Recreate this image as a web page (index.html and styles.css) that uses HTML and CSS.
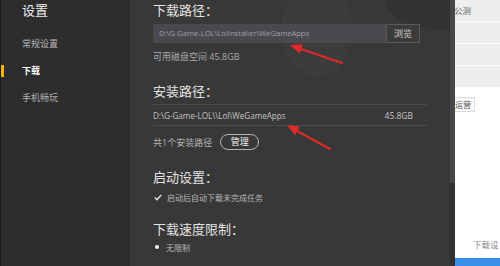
FILE: index.html
```html
<!DOCTYPE html>
<html lang="zh-CN">
<head>
<meta charset="utf-8">
<title>设置 - 下载</title>
<link rel="stylesheet" href="styles.css">
</head>
<body>
<div class="app">
  <aside class="sidebar">
    <div class="side-title">设置</div>
    <nav class="side-nav">
      <div class="side-item">常规设置</div>
      <div class="side-item active">下载</div>
      <div class="side-item">手机畅玩</div>
    </nav>
  </aside>

  <main class="content">
    <h2 class="sec-title">下载路径：</h2>
    <div class="path-input">
      <span class="path-text">D:\G-Game-LOL\LolInstaller\WeGameApps</span>
      <button class="browse">浏览</button>
    </div>
    <div class="hint">可用磁盘空间 45.8GB</div>

    <h2 class="sec-title t2">安装路径：</h2>
    <div class="install-row">
      <span class="install-path">D:\G-Game-LOL\\Lol\WeGameApps</span>
      <span>45.8GB</span>
    </div>
    <div class="manage-row">
      <span>共1个安装路径</span>
      <button class="pill">管理</button>
    </div>

    <h2 class="sec-title t3">启动设置：</h2>
    <div class="check-row">
      <svg class="check" width="8" height="7" viewBox="0 0 8 7"><polyline points="0.8,3.6 3,5.8 7.2,1" fill="none" stroke="#e6e6e6" stroke-width="1.4"/></svg>
      <span>启动后自动下载未完成任务</span>
    </div>

    <h2 class="sec-title t4">下载速度限制：</h2>
    <div class="radio-row">
      <span class="dot"></span>
      <span>无限制</span>
    </div>
  </main>

  <div class="scrollbar"><div class="thumb"></div></div>

  <aside class="peek">
    <div class="peek-rows">
      <div class="peek-row">公测</div>
      <div class="peek-row"></div>
      <div class="peek-row"></div>
      <div class="peek-row"></div>
    </div>
    <div class="peek-chip">运营</div>
    <div class="peek-spacer"></div>
    <div class="peek-foot">下载设</div>
    <div class="peek-bar"></div>
  </aside>
</div>

<svg class="annot" width="500" height="266" viewBox="0 0 500 266">
  <line x1="342" y1="63" x2="301" y2="49" stroke="#e02a2a" stroke-width="2" stroke-linecap="round"/>
  <polygon points="290,45 302.9,44.2 299.7,53.6" fill="#e02a2a"/>
  <line x1="330" y1="149" x2="297" y2="131" stroke="#e02a2a" stroke-width="2" stroke-linecap="round"/>
  <polygon points="287,125 299.9,126.5 295,135.2" fill="#e02a2a"/>
</svg>
</body>
</html>
```

FILE: styles.css
```css
* { box-sizing: border-box; }

html, body {
  margin: 0;
  padding: 0;
  width: 500px;
  height: 266px;
  overflow: hidden;
}

body {
  position: relative;
  font-family: "Open Sans", "Noto Sans CJK SC", sans-serif;
  background: #383838;
}

.app {
  display: flex;
  width: 500px;
  height: 266px;
}

/* ---------- sidebar ---------- */
.sidebar {
  width: 130px;
  flex: none;
  background: #2d2d2d;
  border-left: 1px solid #1b1b1b;
  padding-top: 1px;
}

.side-title {
  padding-left: 21px;
  font-size: 13px;
  line-height: 18px;
  color: #ececec;
}

.side-nav {
  margin-top: 11px;
  display: flex;
  flex-direction: column;
}

.side-item {
  display: flex;
  align-items: center;
  height: 27px;
  font-size: 9px;
  color: #b4b4b4;
}

.side-item::before {
  content: "";
  width: 3px;
  height: 12px;
  margin-right: 18px;
  background: transparent;
}

.side-item.active {
  color: #ffffff;
  font-weight: bold;
}

.side-item.active::before {
  background: #f2b705;
}

/* ---------- main content ---------- */
.content {
  width: 320px;
  flex: none;
  padding: 1px 0 0 23px;
  background:
    radial-gradient(ellipse 36px 47px at 187px 30px, #3c3c3c 97%, transparent 100%),
    radial-gradient(ellipse 58px 30px at 312px 0px, #323232 97%, transparent 100%),
    #383838;
}

.sec-title {
  margin: 0;
  font-size: 13px;
  font-weight: normal;
  line-height: 18px;
  color: #e2e2e2;
}

.sec-title.t2 { margin-top: 18px; }
.sec-title.t3 { margin-top: 18px; }
.sec-title.t4 { margin-top: 17px; }

.path-input {
  margin-top: 5px;
  width: 267px;
  height: 19px;
  display: flex;
  align-items: center;
  background: #4a4950;
}

.path-text {
  padding-left: 6px;
  font-size: 7.6px;
  line-height: 19px;
  color: #9f9fa3;
}

.browse {
  margin-left: auto;
  width: 34px;
  height: 19px;
  padding: 0;
  background: #3b3b3b;
  border: 1px solid #5a5a5a;
  color: #d4d4d4;
  font-family: inherit;
  font-size: 9px;
  line-height: 17px;
}

.hint {
  margin-top: 7px;
  font-size: 9px;
  line-height: 14px;
  color: #a9a9a9;
}

.install-row {
  margin-top: 4px;
  width: 274px;
  height: 22px;
  display: flex;
  align-items: center;
  justify-content: space-between;
  padding-right: 14px;
  border-top: 1px solid #4b4b4b;
  border-bottom: 1px solid #4b4b4b;
  font-size: 8.5px;
  color: #c4c4c4;
}

.install-path {
  font-size: 8.1px;
}

.manage-row {
  margin-top: 8px;
  height: 16px;
  display: flex;
  align-items: center;
  gap: 8px;
  font-size: 9px;
  color: #b4b4b4;
}

.pill {
  width: 39px;
  height: 16px;
  padding: 0;
  border: 1px solid #b4b4b4;
  border-radius: 8px;
  background: transparent;
  color: #f0f0f0;
  font-family: inherit;
  font-size: 9px;
  line-height: 14px;
}

.check-row {
  margin-top: 5px;
  height: 12px;
  display: flex;
  align-items: center;
  font-size: 8px;
  color: #b8b8b8;
}

.check {
  margin-left: 1px;
  margin-right: 5px;
  flex: none;
}

.radio-row {
  margin-top: 3px;
  height: 12px;
  display: flex;
  align-items: center;
  font-size: 8px;
  color: #b8b8b8;
}

.dot {
  width: 4px;
  height: 4px;
  margin-left: 2px;
  margin-right: 7px;
  border-radius: 50%;
  background: #f0f0f0;
}

/* ---------- scrollbar ---------- */
.scrollbar {
  width: 5px;
  flex: none;
  background: #313131;
}

.thumb {
  height: 183px;
  background: #474747;
}

/* ---------- peek of right window ---------- */
.peek {
  width: 45px;
  flex: none;
  display: flex;
  flex-direction: column;
  background: #ffffff;
  overflow: hidden;
}

.peek-row {
  height: 22px;
  background: #eeeeee;
  border-bottom: 1px solid #fbfbfb;
  font-size: 8.5px;
  line-height: 21px;
  color: #666666;
  white-space: nowrap;
  text-indent: -1px;
}

.peek-chip {
  margin-top: 9px;
  width: 20px;
  height: 15px;
  border: 1px solid #dcdcdc;
  border-left: none;
  background: #f8f8f8;
  font-size: 8px;
  line-height: 13px;
  color: #555555;
  white-space: nowrap;
}

.peek-spacer { flex: 1; }

.peek-foot {
  padding-left: 18px;
  margin-bottom: 7px;
  font-size: 8.5px;
  line-height: 12px;
  color: #8a8a8a;
  white-space: nowrap;
}

.peek-bar {
  height: 8px;
  flex: none;
  background: #3a8ee8;
}

/* ---------- annotation arrows ---------- */
.annot {
  position: absolute;
  left: 0;
  top: 0;
  pointer-events: none;
}
```
